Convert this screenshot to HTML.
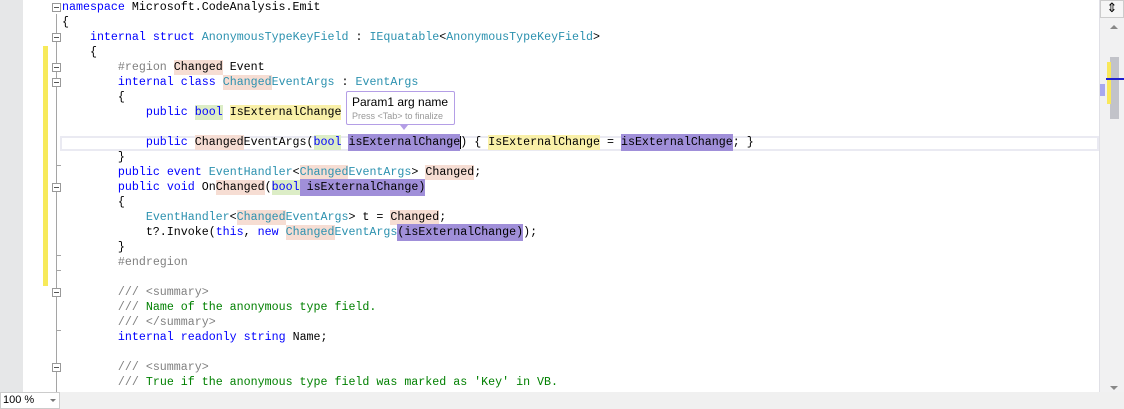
<!DOCTYPE html>
<html><head><meta charset="utf-8"><style>
*{margin:0;padding:0;box-sizing:border-box}
body{width:1124px;height:409px;overflow:hidden;background:#fff;position:relative;font-family:"Liberation Mono",monospace;font-size:11.65px}
.gm{position:absolute;left:0;top:0;width:23px;height:392px;background:#e6e7e8}
.l{position:absolute;left:62px;height:15px;line-height:15px;white-space:pre;color:#000}
.k{color:#0000ff}.t{color:#2b91af}.c{color:#008000}.g{color:#808080}
.pk{background:#f6ddd3;padding:1px 0}.gr{background:#dcedc6;padding:1px 0}.ye{background:#f9f0a8;padding:1px 0}.pu{background:#a08fd9;padding:2px 0}
.cur{border-right:1px solid #000;margin-right:-1px}
.fb{position:absolute;left:52px;width:9px;height:9px;border:1px solid #999;background:#fff}
.fb:after{content:"";position:absolute;left:1px;top:3px;width:5px;height:1px;background:#555}
.vl{position:absolute;left:56px;width:1px;background:#a5a5a5}
.tk{position:absolute;left:56px;width:5px;height:1px;background:#a5a5a5}
</style></head><body>
<div class="gm"></div>
<div style="position:absolute;left:43px;top:46px;width:5px;height:240px;background:#f7ea5a"></div>
<div style="position:absolute;left:60px;top:136px;width:1039px;height:15px;border:2px solid #eaeaf2"></div>
<div class="vl" style="top:14px;height:378px"></div>
<div class="fb" style="top:3px"></div>
<div class="fb" style="top:33px"></div>
<div class="fb" style="top:63px"></div>
<div class="fb" style="top:78px"></div>
<div class="tk" style="top:165px"></div>
<div class="fb" style="top:183px"></div>
<div class="tk" style="top:255px"></div>
<div class="tk" style="top:270px"></div>
<div class="fb" style="top:288px"></div>
<div class="tk" style="top:330px"></div>
<div class="fb" style="top:363px"></div>

<div class="l" style="top:0"><span class="k">namespace</span> Microsoft.CodeAnalysis.Emit</div>
<div class="l" style="top:15px">{</div>
<div class="l" style="top:30px">    <span class="k">internal</span> <span class="k">struct</span> <span class="t">AnonymousTypeKeyField</span> : <span class="t">IEquatable</span>&lt;<span class="t">AnonymousTypeKeyField</span>&gt;</div>
<div class="l" style="top:45px">    {</div>
<div class="l" style="top:60px">        <span class="g">#region</span> <span class="pk">Changed</span> Event</div>
<div class="l" style="top:75px">        <span class="k">internal</span> <span class="k">class</span> <span class="t"><span class="pk">Changed</span>EventArgs</span> : <span class="t">EventArgs</span></div>
<div class="l" style="top:90px">        {</div>
<div class="l" style="top:105px">            <span class="k">public</span> <span class="k gr">bool</span> <span class="ye">IsExternalChange</span> { <span class="k">get</span>; <span class="k">set</span>; }</div>
<div class="l" style="top:135px">            <span class="k">public</span> <span class="pk">Changed</span>EventArgs(<span class="k gr">bool</span> <span class="pu">isExternalChang<span class="cur">e</span></span>) { <span class="ye">IsExternalChange</span> = <span class="pu">isExternalChange</span>; }</div>
<div class="l" style="top:150px">        }</div>
<div class="l" style="top:165px">        <span class="k">public</span> <span class="k">event</span> <span class="t">EventHandler</span>&lt;<span class="t"><span class="pk">Changed</span>EventArgs</span>&gt; <span class="pk">Changed</span>;</div>
<div class="l" style="top:180px">        <span class="k">public</span> <span class="k">void</span> On<span class="pk">Changed</span>(<span class="k gr">bool</span><span class="pu"> isExternalChange)</span></div>
<div class="l" style="top:195px">        {</div>
<div class="l" style="top:210px">            <span class="t">EventHandler</span>&lt;<span class="t"><span class="pk">Changed</span>EventArgs</span>&gt; t = <span class="pk">Changed</span>;</div>
<div class="l" style="top:225px">            t?.Invoke(<span class="k">this</span>, <span class="k">new</span> <span class="t"><span class="pk">Changed</span>EventArgs</span><span class="pu">(isExternalChange)</span>);</div>
<div class="l" style="top:240px">        }</div>
<div class="l" style="top:255px">        <span class="g">#endregion</span></div>
<div class="l" style="top:285px">        <span class="g">/// &lt;summary&gt;</span></div>
<div class="l" style="top:300px">        <span class="g">///</span> <span class="c">Name of the anonymous type field.</span></div>
<div class="l" style="top:315px">        <span class="g">/// &lt;/summary&gt;</span></div>
<div class="l" style="top:330px">        <span class="k">internal</span> <span class="k">readonly</span> <span class="k">string</span> Name;</div>
<div class="l" style="top:360px">        <span class="g">/// &lt;summary&gt;</span></div>
<div class="l" style="top:375px">        <span class="g">///</span> <span class="c">True if the anonymous type field was marked as 'Key' in VB.</span></div>

<div style="position:absolute;left:346px;top:91px;width:109px;height:34px;border:1px solid #b49ee6;border-radius:2px;background:#fff;font-family:'Liberation Sans',sans-serif">
<div style="position:absolute;left:5px;top:3px;font-size:12px;color:#000">Param1 arg name</div>
<div style="position:absolute;left:5px;top:19px;font-size:9px;color:#999">Press &lt;Tab&gt; to finalize</div>
</div>
<div style="position:absolute;left:400px;top:125px;width:0;height:0;border-left:4px solid transparent;border-right:4px solid transparent;border-top:5px solid #b49ee6"></div>

<div style="position:absolute;left:1099px;top:0;width:25px;height:392px;background:#f1f1f2;border-left:1px solid #e0e0e6"></div>
<div style="position:absolute;left:1100px;top:0;width:24px;height:18px;background:#f6f6f6;border:1px solid #ccc;font-size:13px;text-align:center;line-height:16px;font-family:'DejaVu Sans',sans-serif">⇕</div>
<div style="position:absolute;left:1110px;top:25px;border-left:4px solid transparent;border-right:4px solid transparent;border-bottom:4px solid #888"></div>
<div style="position:absolute;left:1110px;top:386px;border-left:4px solid transparent;border-right:4px solid transparent;border-top:4px solid #888"></div>
<div style="position:absolute;left:1110px;top:57px;width:9px;height:62px;background:#c2c3c9"></div>
<div style="position:absolute;left:1107px;top:62px;width:4px;height:42px;background:#f9e85a"></div>
<div style="position:absolute;left:1106px;top:78px;width:18px;height:2px;background:#1f1fd0"></div>
<div style="position:absolute;left:1100px;top:84px;width:5px;height:12px;background:#a8a8f0"></div>
<div style="position:absolute;left:0;top:392px;width:1124px;height:17px;background:#f0f0f0"></div>
<div style="position:absolute;left:0;top:392px;width:60px;height:17px;background:#fff;border:1px solid #ccc;font-family:'Liberation Sans',sans-serif;font-size:11px;line-height:15px;padding-left:2px">100 %</div>
<div style="position:absolute;left:50px;top:399px;border-left:3px solid transparent;border-right:3px solid transparent;border-top:3px solid #777"></div>
</body></html>
